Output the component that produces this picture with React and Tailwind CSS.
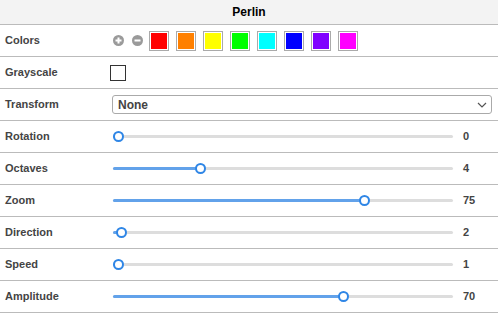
import React from "react";

const swatches = ["#ff0000", "#ff8000", "#ffff00", "#00ff00", "#00ffff", "#0000ff", "#8000ff", "#ff00ff"];

const sliders = [
  { label: "Rotation", value: 0, frac: 0 },
  { label: "Octaves", value: 4, frac: 0.25 },
  { label: "Zoom", value: 75, frac: 0.748 },
  { label: "Direction", value: 2, frac: 0.01 },
  { label: "Speed", value: 1, frac: 0 },
  { label: "Amplitude", value: 70, frac: 0.685 },
];

function Row({ label, children }) {
  return (
    <div className="flex h-8 items-center border-b border-[#bbb]">
      <div className="w-[112px] shrink-0 pl-[5px] text-[11px] font-bold text-[#444]">{label}</div>
      <div className="flex flex-1 items-center">{children}</div>
    </div>
  );
}

function Slider({ value, frac }) {
  const thumb = frac * 329;
  return (
    <>
      <div className="relative ml-[1px] h-[11px] w-[340px]">
        <div className="absolute left-0 right-0 top-[4px] h-[3px] rounded-full bg-[#ddd]" />
        <div
          className="absolute left-0 top-[4px] h-[3px] rounded-full bg-[#62a2ea]"
          style={{ width: thumb + 5 }}
        />
        <div
          className="absolute top-0 h-[11px] w-[11px] rounded-full border-2 border-[#2f86e6] bg-white"
          style={{ left: thumb }}
        />
      </div>
      <div className="ml-[10px] text-[11px] font-bold text-[#444]">{value}</div>
    </>
  );
}

function CircleIcon({ minus }) {
  return (
    <svg width="11" height="11" viewBox="0 0 11 11">
      <circle cx="5.5" cy="5.5" r="5.5" fill="#9a9a9a" />
      <rect x="2.5" y="4.5" width="6" height="2" fill="#fff" />
      {!minus && <rect x="4.5" y="2.5" width="2" height="6" fill="#fff" />}
    </svg>
  );
}

export default function App() {
  return (
    <div className="h-[319px] w-[498px] bg-white font-['Liberation_Sans',Arial,sans-serif]">
      <div className="flex h-[25px] items-center justify-center border-b border-[#bbb] bg-[#f3f3f3] text-[12px] font-bold text-black">
        Perlin
      </div>

      <Row label="Colors">
        <div className="ml-[1px] flex items-center gap-2">
          <CircleIcon />
          <CircleIcon minus />
        </div>
        <div className="ml-[6px] flex gap-[7px]">
          {swatches.map((c) => (
            <div key={c} className="h-5 w-5 border border-[#aaa] p-[1px] bg-white">
              <div className="h-full w-full" style={{ background: c }} />
            </div>
          ))}
        </div>
      </Row>

      <Row label="Grayscale">
        <div className="-ml-[2px] h-4 w-4 border border-[#333] bg-white" />
      </Row>

      <Row label="Transform">
        <div className="flex h-[19px] w-[380px] items-center justify-between rounded-[3px] border border-[#aaa] bg-white pl-[5px] pr-[4px]">
          <span className="text-[12px] font-bold text-[#444]">None</span>
          <svg width="10" height="6" viewBox="0 0 10 6">
            <path d="M1 1 L5 5 L9 1" fill="none" stroke="#555" strokeWidth="1.2" />
          </svg>
        </div>
      </Row>

      {sliders.map((s) => (
        <Row key={s.label} label={s.label}>
          <Slider value={s.value} frac={s.frac} />
        </Row>
      ))}
    </div>
  );
}
